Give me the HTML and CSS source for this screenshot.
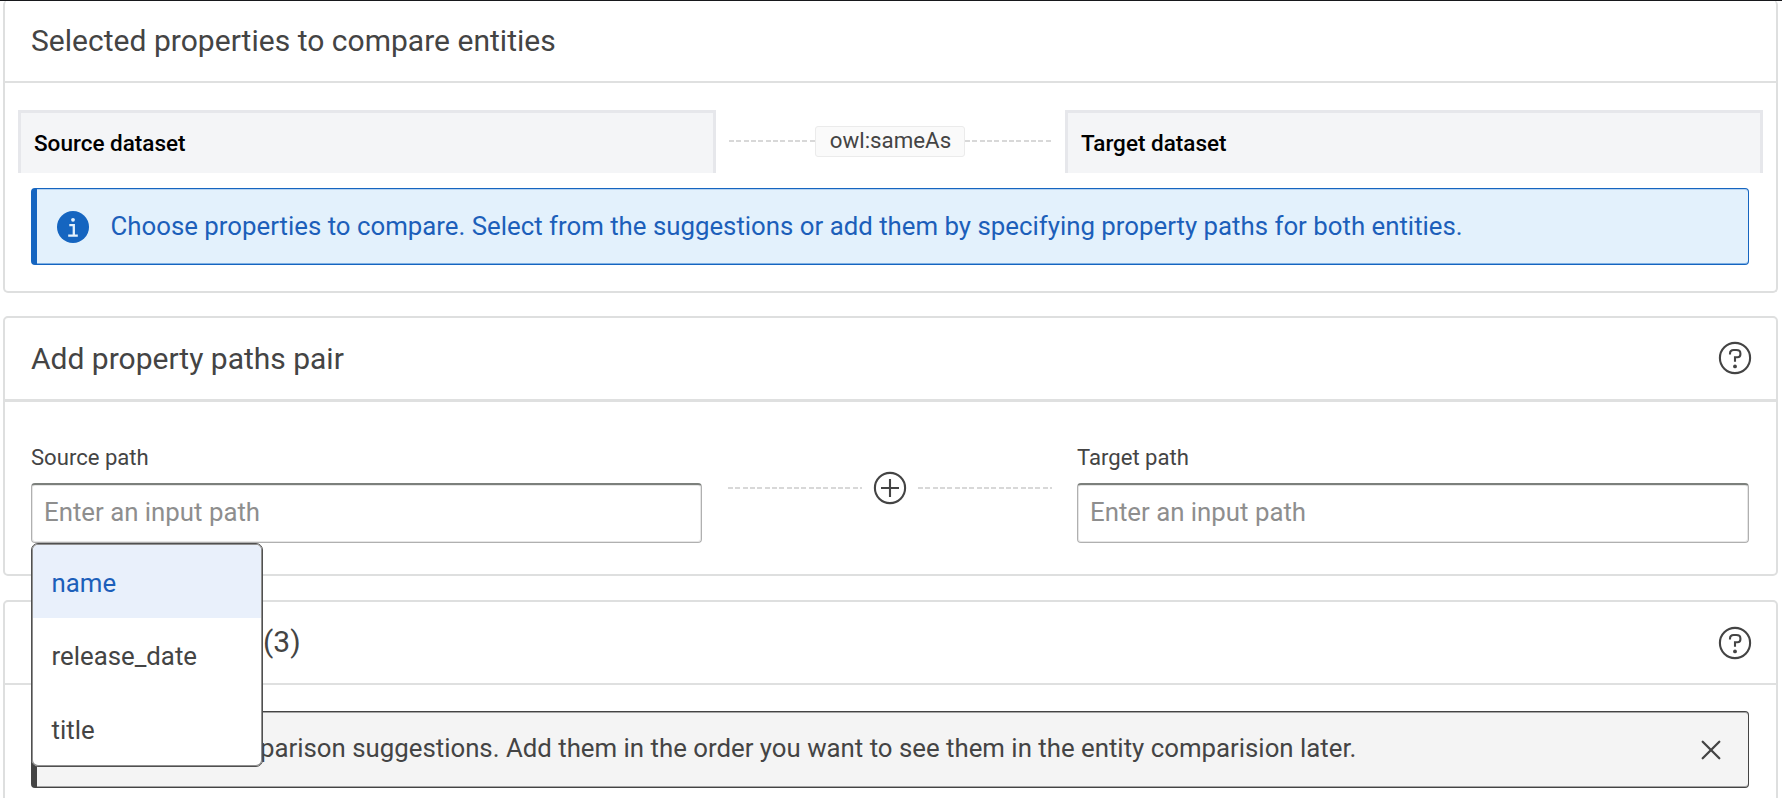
FILE: index.html
```html
<!DOCTYPE html>
<html lang="en">
<head>
<meta charset="utf-8">
<title>Compare entities</title>
<link rel="stylesheet" href="styles.css">
</head>
<body>
<main class="page">
  <section class="card card-selected">
    <header class="card-header"><h2 class="card-title title-selected">Selected properties to compare entities</h2></header>
    <div class="datasets">
      <div class="dataset">Source dataset</div>
      <div class="relation"><span class="dash"></span><span class="tag">owl:sameAs</span><span class="dash"></span></div>
      <div class="dataset">Target dataset</div>
    </div>
    <div class="notice notice-info">
      <svg class="icon-info" viewBox="0 0 32 32"><circle cx="16" cy="16" r="16" fill="#1565c0"/><circle cx="16" cy="8.8" r="1.9" fill="#e3f1fc"/><path d="M12.3 14.2h4.5v9.8M11.2 24.7h9.6" fill="none" stroke="#e3f1fc" stroke-width="2.3"/></svg>
      <p class="notice-text">Choose properties to compare. Select from the suggestions or add them by specifying property paths for both entities.</p>
    </div>
  </section>

  <section class="card card-paths">
    <header class="card-header header-thick">
      <h2 class="card-title">Add property paths pair</h2>
      <svg class="icon-help" viewBox="0 0 34 34"><circle cx="17" cy="17" r="15.1"/><path d="M12 13.4V12.6Q12 9 15.7 9H18.3Q22.4 9 22.4 12.4V13.2Q22.4 16.2 19.5 16.2H17V20.8"/><circle class="dot" cx="17" cy="25.4" r="1.9"/></svg>
    </header>
    <div class="paths">
      <div class="field">
        <label class="label" for="source">Source path</label>
        <input class="input" id="source" placeholder="Enter an input path">
        <ul class="menu">
          <li class="option option-active">name</li>
          <li class="option">release_date</li>
          <li class="option">title</li>
        </ul>
      </div>
      <div class="adder"><span class="dash"></span>
        <svg class="icon-plus" viewBox="0 0 34 34"><circle cx="17" cy="17" r="15.1"/><path d="M8 17h18M17 8v18"/></svg>
        <span class="dash"></span></div>
      <div class="field">
        <label class="label" for="target">Target path</label>
        <input class="input" id="target" placeholder="Enter an input path">
      </div>
    </div>
  </section>

  <section class="card card-suggestions">
    <header class="card-header">
      <h2 class="card-title title-count">(3)</h2>
      <svg class="icon-help" viewBox="0 0 34 34"><circle cx="17" cy="17" r="15.1"/><path d="M12 13.4V12.6Q12 9 15.7 9H18.3Q22.4 9 22.4 12.4V13.2Q22.4 16.2 19.5 16.2H17V20.8"/><circle class="dot" cx="17" cy="25.4" r="1.9"/></svg>
    </header>
    <div class="notice notice-neutral">
      <p class="notice-text">parison suggestions. Add them in the order you want to see them in the entity comparision later.</p>
      <svg class="icon-close" viewBox="0 0 20 20"><path d="M1.7 1.7l16.6 16.6M18.3 1.7L1.7 18.3"/></svg>
    </div>
  </section>
</main>
</body>
</html>
```
FILE: styles.css
```css
* { box-sizing: border-box; }
body { margin: 0; background: #fff; font-family: Roboto, "Liberation Sans", sans-serif; color: #444; }
h2, p, ul { margin: 0; padding: 0; font-weight: 400; }
.page { height: 798px; overflow: hidden; border-top: 1px solid #17181c; padding: 0 4px 0 3px; display: flex; flex-direction: column; gap: 24px; }
.card { flex: none; border: 2px solid #dedfdf; border-radius: 5px; background: #fff; }
.card-selected { height: 293px; margin-top: -1px; border-top: 0; }
.card-paths { height: 260px; margin-top: -1px; }
.card-suggestions { height: 240px; }
.card-header { height: 83px; display: flex; align-items: center; justify-content: space-between; border-bottom: 2px solid #dfe0e0; padding: 0 24px 0 26px; }
.header-thick { height: 84px; border-bottom-width: 3px; }
.card-title { font-size: 30px; line-height: 40px; }
.title-selected { letter-spacing: 0.025px; }
.icon-help, .icon-plus { width: 34px; height: 34px; flex: none; fill: none; stroke: #444; stroke-width: 2.1; }
.icon-help .dot { fill: #444; stroke: none; }
.header-thick .icon-help { margin-bottom: 1px; }
.datasets { display: grid; grid-template-columns: 698px 1fr 698px; margin: 27px 13px 0; }
.dataset { height: 63px; background: #f4f5f7; border: 3px solid #e6e7eb; border-bottom: 0; padding: 0 0 0 13px; color: #000; font-size: 22.5px; font-weight: 500; line-height: 61px; }
.relation, .adder { display: flex; align-items: center; }
.relation { height: 62px; padding: 0 13px; }
.dash { flex: 1; height: 2px; background: repeating-linear-gradient(90deg, #d8d8d8 0 5px, transparent 5px 7.33px); }
.tag { width: 150px; height: 31px; margin: 0 0 0 -1px; border: 1.5px solid #ebebeb; border-radius: 3px; background: #fafafa; padding-left: 1px; font-size: 22.3px; line-height: 26px; text-align: center; }
.notice { display: flex; align-items: center; height: 77px; margin-left: 26px; margin-right: 27px; border: 1px solid; border-left-width: 6px; border-radius: 4px; }
.notice-text { font-size: 25.8px; line-height: 36px; white-space: nowrap; padding-bottom: 2px; }
.notice-info { margin-top: 15px; padding-left: 20px; color: #1c5fba; background: #e3f1fc; border-color: #1565c0; box-shadow: inset 0 -1px #7fb0e4, inset 0 1px #b5d2f0; }
.icon-info { width: 32px; height: 32px; margin-right: 21.5px; }
.notice-neutral { margin-top: 26px; justify-content: space-between; padding: 0 27px 0 223px; background: #f4f4f4; border-color: #444; box-shadow: inset 0 -1px #a5a5a5, inset 0 1px #a5a5a5; }
.notice-neutral .notice-text { padding-bottom: 4px; }
.icon-close { width: 20px; height: 20px; fill: none; stroke: #444; stroke-width: 2.3; stroke-linecap: round; }
.title-count { padding: 0 0 1px 232px; }
.paths { display: grid; grid-template-columns: 671px 1fr 672px; margin: 40px 27px 0 26px; }
.field { position: relative; }
.label { display: block; font-size: 22.1px; line-height: 30px; height: 41px; }
.input { display: block; width: 100%; height: 60px; border: 1px solid #b0b0b0; border-top: 2px solid #7c807c; border-radius: 4px; box-shadow: inset 0 0 0 1px #e6e6e6; padding: 0 12px 4px; font: 25.8px Roboto, sans-serif; outline: 0; background: #fff; }
.input::placeholder { color: #8e8e8e; opacity: 1; }
.adder { height: 34px; margin-top: 29px; padding: 0 25px 0 26px; gap: 11px; }
.menu { position: absolute; left: 0; top: 101px; z-index: 2; width: 232px; height: 224px; list-style: none; border: 1px solid #505050; border-radius: 7px; box-shadow: inset 0 0 0 1px #909090; background: #fff; overflow: hidden; padding: 1px; }
.option { height: 73.4px; padding-left: 18.5px; line-height: 76px; font-size: 25.8px; }
.option-active { background: #e9f0fb; color: #1c5fba; border-radius: 5px 5px 0 0; }
```
